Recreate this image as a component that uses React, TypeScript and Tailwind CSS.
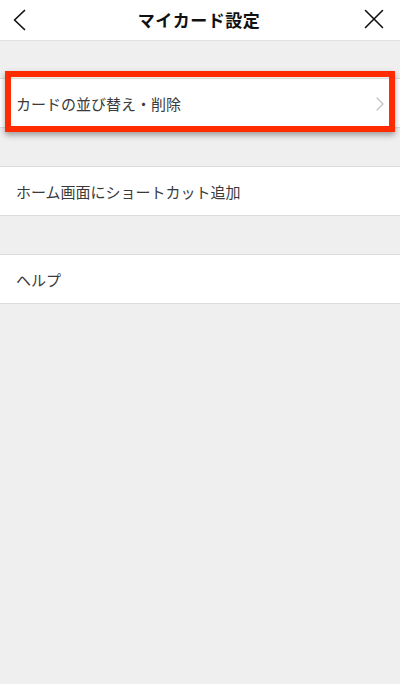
const rows = ["カードの並び替え・削除", "ホーム画面にショートカット追加", "ヘルプ"];

const App = () => {
  return (
    <div
      className="min-h-[684px] bg-[#efefef] text-[#333333]"
      style={{ fontFamily: '"Noto Sans CJK JP", "Noto Sans", sans-serif' }}
    >
      <header className="grid h-[41px] grid-cols-[1fr_auto_1fr] items-center border-b border-[#e2e2e2] bg-white pl-[12px] pr-[16px]">
        {/* back */}
        <svg width="14" height="22" viewBox="0 0 14 22" fill="none" className="mt-[-1px]">
          <path d="M12.5 1.5 L2.5 11 L12.5 20.5" stroke="#111" strokeWidth="1.7" strokeLinecap="round" strokeLinejoin="round" />
        </svg>
        <h1 className="ml-[2px] text-[17px] font-bold tracking-[0.5px] text-[#111]">マイカード設定</h1>
        {/* close */}
        <svg width="20" height="20" viewBox="0 0 20 20" fill="none" className="mt-[-3px] justify-self-end">
          <path d="M1.5 1.5 L18.5 18.5 M18.5 1.5 L1.5 18.5" stroke="#111" strokeWidth="1.6" strokeLinecap="round" />
        </svg>
      </header>

      <div className="pt-[37px]">
        {rows.map((label, i) => (
          <div
            key={label}
            className={`relative flex h-[50px] items-center justify-between border-y border-[#dcdcdc] bg-white pl-[16px] pr-[16px] ${
              i > 0 ? "mt-[38px]" : ""
            }`}
          >
            <span className="text-[15px] leading-none text-[#3a3a3a]">{label}</span>
            {i === 0 && (
              <>
                <svg width="8" height="14" viewBox="0 0 8 14" fill="none" className="mt-[2px]">
                  <path d="M1 1 L7 7 L1 13" stroke="#c4c4c4" strokeWidth="1.4" strokeLinecap="round" strokeLinejoin="round" />
                </svg>
                <div className="pointer-events-none absolute -top-[8px] left-[5px] right-[5px] -bottom-[5px] border-[6px] border-[#fe2c00] shadow-[0_3px_6px_rgba(0,0,0,0.35)]" />
              </>
            )}
          </div>
        ))}
      </div>
    </div>
  );
};

export default App;
